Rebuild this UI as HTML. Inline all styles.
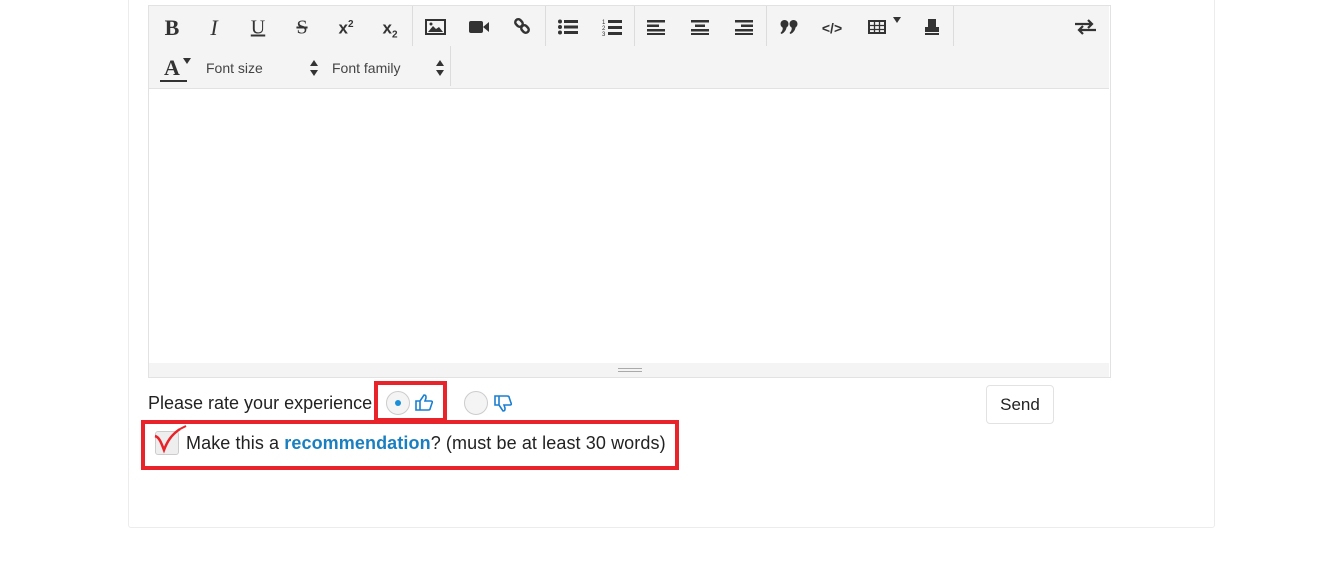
<!DOCTYPE html>
<html><head><style>
body{margin:0;width:1342px;height:567px;background:#fff;position:relative;font-family:"Liberation Sans",sans-serif;overflow:hidden}
.abs{position:absolute}
.card{left:128px;top:-2px;width:1085px;height:528px;border:1px solid #ececec;border-radius:3px}
.ed{left:148px;top:5px;width:961px;height:371px;border:1px solid #e2e2e2;background:#fff}
.tb{left:149px;top:6px;width:960px;height:82px;background:#f4f4f4;border-bottom:1px solid #e2e2e2}
.sep{position:absolute;width:1px;background:#dcdcdc}
.ic{position:absolute;color:#333;font-size:19px;transform:translate(-50%,-50%);line-height:1}
.rz{left:149px;top:363px;width:960px;height:14px;background:#f4f4f4}
.t{font-size:18px;color:#222}
.red{position:absolute;border:4px solid #e8232a}
</style></head><body>
<div class="abs card"></div>
<div class="abs ed"></div>
<div class="abs tb"></div>
<div class="sep" style="left:412px;top:6px;height:40px"></div>
<div class="sep" style="left:545px;top:6px;height:40px"></div>
<div class="sep" style="left:634px;top:6px;height:40px"></div>
<div class="sep" style="left:766px;top:6px;height:40px"></div>
<div class="sep" style="left:953px;top:6px;height:40px"></div>
<div class="sep" style="left:450px;top:46px;height:40px"></div>
<span class="ic" style="left:172px;top:28px;font:bold 22px 'Liberation Serif',serif">B</span>
<span class="ic" style="left:214px;top:28px;font:italic 22px 'Liberation Serif',serif">I</span>
<span class="ic" style="left:258px;top:28px;font:20px 'Liberation Serif',serif;text-decoration:underline">U</span>
<span class="ic" style="left:302px;top:28px;font:20px 'Liberation Serif',serif;text-decoration:line-through">S</span>
<span class="ic" style="left:346px;top:28px;font-weight:bold;font-size:17px">x<sup style="font-size:10px">2</sup></span>
<span class="ic" style="left:390px;top:30px;font-weight:bold;font-size:17px">x<sub style="font-size:10px">2</sub></span>
<svg class="abs" style="left:425px;top:19px" width="21" height="16"><rect x="1" y="1" width="19" height="14" fill="none" stroke="#333" stroke-width="2"/><path d="M3 13l5-6 3 3 3-2 4 5z" fill="#333"/><circle cx="6" cy="5" r="1.5" fill="#333"/></svg>
<svg class="abs" style="left:469px;top:20px" width="21" height="14"><rect x="0" y="1" width="14" height="12" rx="2" fill="#333"/><path d="M14 7l6-5v10z" fill="#333"/></svg>
<svg class="abs" style="left:513px;top:17px" width="19" height="19"><rect x="2" y="3" width="8" height="6" rx="3" transform="rotate(45 6 6)" fill="none" stroke="#333" stroke-width="2.5"/><rect x="8" y="9" width="8" height="6" rx="3" transform="rotate(45 12 12)" fill="none" stroke="#333" stroke-width="2.5"/></svg>
<svg class="abs" style="left:558px;top:19px" width="20" height="16"><g fill="#333"><circle cx="2" cy="2.5" r="2"/><circle cx="2" cy="8" r="2"/><circle cx="2" cy="13.5" r="2"/><rect x="6" y="1" width="14" height="3"/><rect x="6" y="6.5" width="14" height="3"/><rect x="6" y="12" width="14" height="3"/></g></svg>
<svg class="abs" style="left:602px;top:18px" width="20" height="18"><g fill="#333"><text x="0" y="6" font-size="6" font-family="Liberation Sans">1</text><text x="0" y="12" font-size="6" font-family="Liberation Sans">2</text><text x="0" y="18" font-size="6" font-family="Liberation Sans">3</text><rect x="6" y="2" width="14" height="3"/><rect x="6" y="8" width="14" height="3"/><rect x="6" y="14" width="14" height="3"/></g></svg>
<svg class="abs" style="left:647px;top:19px" width="19" height="16"><g fill="#333"><rect x="0" y="1" width="18" height="2.5"/><rect x="0" y="5.5" width="12" height="2.5"/><rect x="0" y="10" width="18" height="2.5"/><rect x="0" y="14" width="18" height="2"/></g></svg>
<svg class="abs" style="left:691px;top:19px" width="19" height="16"><g fill="#333"><rect x="0" y="1" width="18" height="2.5"/><rect x="4" y="5.5" width="10" height="2.5"/><rect x="0" y="10" width="18" height="2.5"/><rect x="0" y="14" width="18" height="2"/></g></svg>
<svg class="abs" style="left:735px;top:19px" width="19" height="16"><g fill="#333"><rect x="0" y="1" width="18" height="2.5"/><rect x="6" y="5.5" width="12" height="2.5"/><rect x="0" y="10" width="18" height="2.5"/><rect x="0" y="14" width="18" height="2"/></g></svg>
<svg class="abs" style="left:780px;top:19px" width="19" height="16"><g fill="#333"><circle cx="4.5" cy="5" r="4"/><circle cx="13.5" cy="5" r="4"/><path d="M6.5 5q1 7-5 10l-1-1q3-3 2-6zM15.5 5q1 7-5 10l-1-1q3-3 2-6z"/></g></svg>
<span class="ic" style="left:832px;top:28px;font-size:14px;font-weight:bold">&lt;/&gt;</span>
<svg class="abs" style="left:868px;top:20px" width="18" height="14"><rect x="1" y="1" width="16" height="12" fill="none" stroke="#333" stroke-width="2"/><path d="M1 5.5h16M1 9.5h16M6.5 1v12M11.5 1v12" stroke="#333" stroke-width="1.3"/></svg>
<svg class="abs" style="left:893px;top:17px" width="9" height="6"><path d="M0 0h8l-4 6z" fill="#333"/></svg>
<svg class="abs" style="left:925px;top:19px" width="14" height="16"><rect x="3" y="0" width="8" height="8" fill="#333"/><rect x="0" y="8" width="14" height="5" fill="#333"/><rect x="0" y="14" width="14" height="2" fill="#333"/></svg>
<svg class="abs" style="left:1075px;top:19px" width="21" height="16"><path d="M0 5h17M13 1l4 4-4 4M21 11H4M8 7l-4 4 4 4" stroke="#333" stroke-width="2.2" fill="none"/></svg>
<span class="ic" style="left:172px;top:68px;font:bold 22px 'Liberation Serif',serif">A</span>
<div class="abs" style="left:160px;top:80px;width:27px;height:1.5px;background:#333"></div>
<svg class="abs" style="left:183px;top:58px" width="8" height="6"><path d="M0 0h8l-4 6z" fill="#333"/></svg>
<span class="abs" style="left:206px;top:60px;font-size:14px;color:#444">Font size</span>
<svg class="abs" style="left:310px;top:60px" width="8" height="16"><path d="M0 6l4-6 4 6zM0 10l4 6 4-6z" fill="#333"/></svg>
<span class="abs" style="left:332px;top:60px;font-size:14px;color:#444">Font family</span>
<svg class="abs" style="left:436px;top:60px" width="8" height="16"><path d="M0 6l4-6 4 6zM0 10l4 6 4-6z" fill="#333"/></svg>
<div class="abs rz"></div>
<div class="abs" style="left:618px;top:368px;width:24px;height:1px;background:#aaa"></div>
<div class="abs" style="left:618px;top:371px;width:24px;height:1px;background:#aaa"></div>
<span class="abs t" style="left:148px;top:393px">Please rate your experience</span>
<div class="red" style="left:374px;top:381px;width:65px;height:33px"></div>
<div class="abs" style="left:386px;top:391px;width:22px;height:22px;border-radius:50%;border:1px solid #ccc;background:#f4f4f4"></div>
<div class="abs" style="left:395px;top:400px;width:6px;height:6px;border-radius:50%;background:#1a8fd8"></div>
<svg class="abs" style="left:415px;top:393px" width="18" height="18"><path d="M1 8h4v9H1zM5 8l4-6c2 0 2 1 2 3l-1 3h6c1 0 2 1 1 2l-2 6c0 1-1 1-2 1H5" fill="none" stroke="#1a7fd0" stroke-width="1.6"/></svg>
<div class="abs" style="left:464px;top:391px;width:22px;height:22px;border-radius:50%;border:1px solid #ccc;background:#f4f4f4"></div>
<svg class="abs" style="left:494px;top:395px" width="18" height="18"><path d="M1 1h4v9H1zM5 10l4 6c2 0 2-1 2-3l-1-3h6c1 0 2-1 1-2l-2-6c0-1-1-1-2-1H5" fill="none" stroke="#1a7fd0" stroke-width="1.6"/></svg>
<div class="abs" style="left:986px;top:385px;width:66px;height:37px;border:1px solid #e2e2e2;border-radius:4px;font-size:17px;line-height:37px;text-align:center;color:#222">Send</div>
<div class="red" style="left:141px;top:420px;width:530px;height:42px"></div>
<div class="abs" style="left:155px;top:431px;width:22px;height:22px;border:1px solid #ccc;border-radius:3px;background:#eee"></div>
<svg class="abs" style="left:153px;top:424px" width="40" height="32"><path d="M2 12c4 1 6 6 9 14 3-8 7-15 16-21" fill="none" stroke="#e8232a" stroke-width="2.5"/><path d="M27 5l6-3" stroke="#e8232a" stroke-width="2"/></svg>
<span class="abs t" style="left:186px;top:433px;letter-spacing:0.1px">Make this a <b style="color:#1a7fc0">recommendation</b>? (must be at least 30 words)</span>
</body></html>
